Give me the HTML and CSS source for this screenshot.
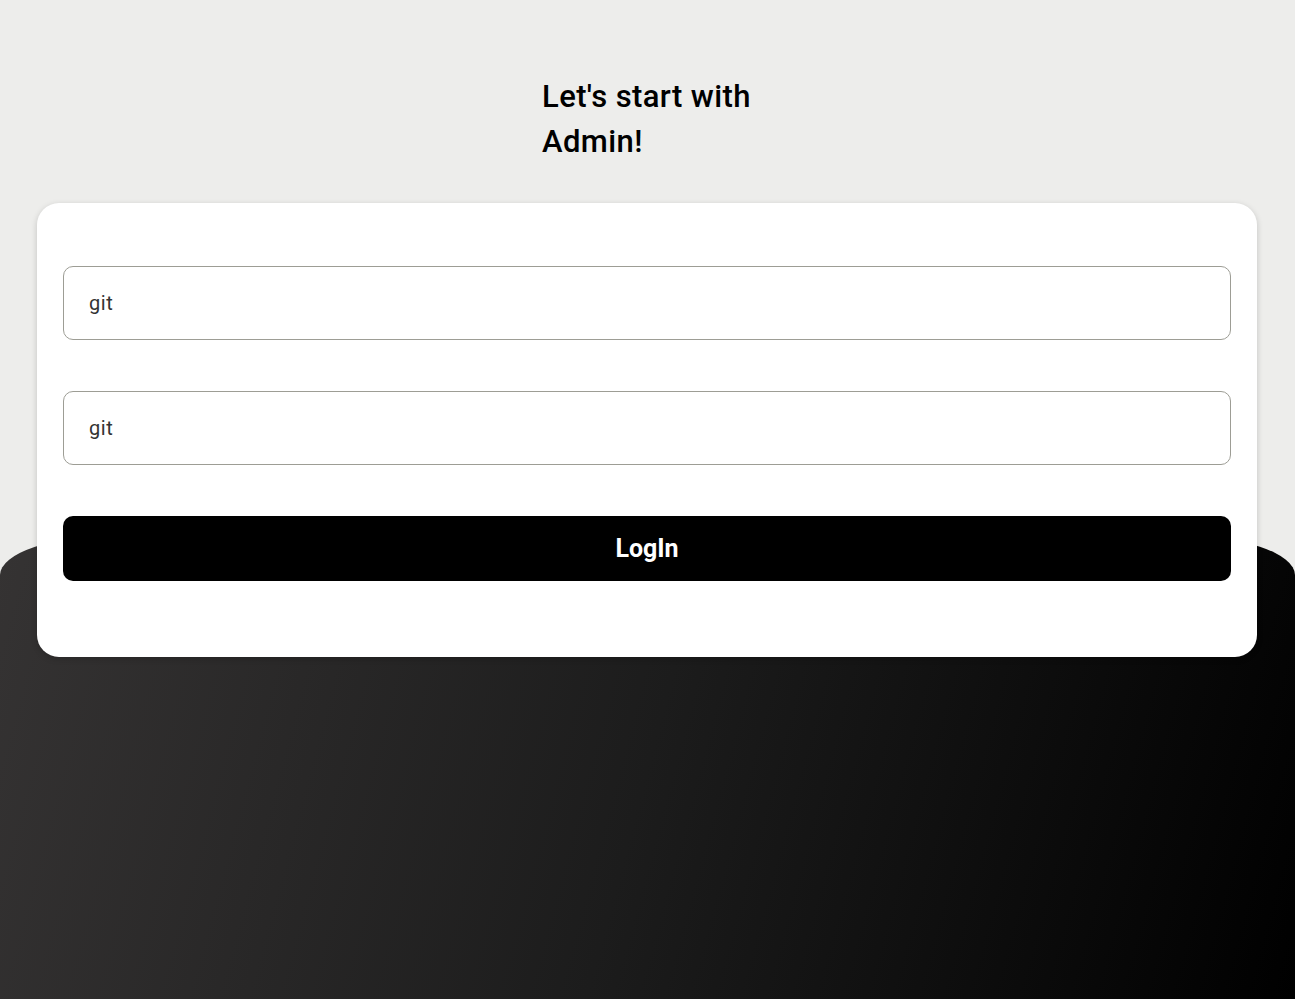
FILE: index.html
```html
<!DOCTYPE html>
<html lang="en">
<head>
<meta charset="utf-8">
<title>Admin Login</title>
<link rel="stylesheet" href="styles.css">
</head>
<body>
<div class="page">
  <h1 class="title">Let's start with Admin!</h1>
  <form class="card">
    <input class="field" type="text" value="git">
    <input class="field" type="text" value="git">
    <button class="btn" type="button">LogIn</button>
  </form>
</div>
</body>
</html>
```
FILE: styles.css
```css
* { box-sizing: border-box; }
html, body { margin: 0; height: 100%; }
body {
  background: #ededeb;
  font-family: Roboto, "Noto Sans", sans-serif;
  overflow: hidden;
}
.page {
  position: relative;
  min-height: 999px;
  padding: 74px 38px 0 37px;
  display: flex;
  flex-direction: column;
  align-items: center;
}
.page::before {
  content: "";
  position: absolute;
  left: 0;
  right: 0;
  top: 535px;
  bottom: 0;
  border-radius: 120px 120px 0 0 / 40px 40px 0 0;
  background: linear-gradient(105deg, #353333 0%, #1c1c1c 50%, #000 100%);
  z-index: 0;
}
.title {
  position: relative;
  z-index: 1;
  margin: 0;
  width: 210px;
  font-size: 31px;
  line-height: 45px;
  font-weight: 500;
  letter-spacing: 0.4px;
  color: #000;
}
.card {
  position: relative;
  z-index: 1;
  margin-top: 39px;
  width: 100%;
  background: #fff;
  border-radius: 22px;
  box-shadow: 0 2px 6px rgba(0, 0, 0, 0.18);
  padding: 63px 26px 76px 26px;
  display: flex;
  flex-direction: column;
  gap: 51px;
}
.field {
  height: 74px;
  width: 100%;
  border: 1px solid #9d9d95;
  border-radius: 10px;
  padding: 0 25px;
  font-family: Roboto, "Noto Sans", sans-serif;
  font-size: 20px;
  color: #333;
  letter-spacing: 0.6px;
  background: #fff;
  outline: none;
}
.btn {
  height: 65px;
  width: 100%;
  border: none;
  border-radius: 10px;
  background: #000;
  color: #fff;
  font-family: Roboto, "Noto Sans", sans-serif;
  font-size: 25px;
  font-weight: 700;
  cursor: pointer;
}
```
